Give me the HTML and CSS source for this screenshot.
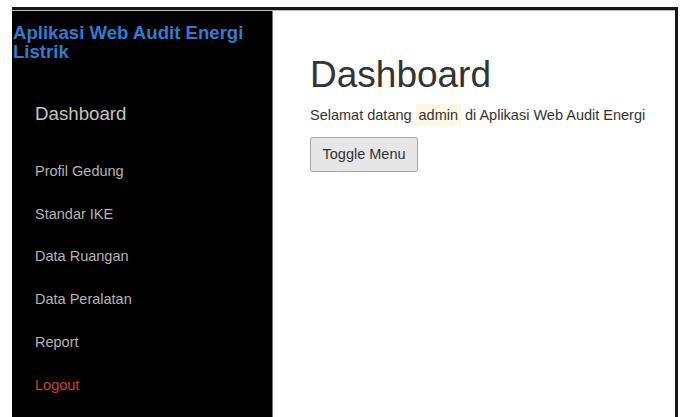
FILE: index.html
```html
<!DOCTYPE html>
<html lang="id">
<head>
<meta charset="utf-8">
<title>Dashboard - Aplikasi Web Audit Energi Listrik</title>
<link rel="stylesheet" href="styles.css">
</head>
<body>
<div class="window">
  <div class="layout">
    <aside class="sidebar">
      <h3 class="brand">Aplikasi Web Audit Energi Listrik</h3>
      <ul class="nav">
        <li class="nav-home"><a href="#">Dashboard</a></li>
        <li><a href="#">Profil Gedung</a></li>
        <li><a href="#">Standar IKE</a></li>
        <li><a href="#">Data Ruangan</a></li>
        <li><a href="#">Data Peralatan</a></li>
        <li><a href="#">Report</a></li>
        <li><a href="#" class="logout">Logout</a></li>
      </ul>
    </aside>
    <main class="content">
      <h1 class="title">Dashboard</h1>
      <p class="welcome">Selamat datang <mark class="user">admin</mark> di Aplikasi Web Audit Energi</p>
      <button class="toggle" type="button">Toggle Menu</button>
    </main>
  </div>
</div>
</body>
</html>
```

FILE: styles.css
```css
html, body {
  height: 100%;
}

body {
  margin: 0;
  background: #ffffff;
  font-family: "Liberation Sans", Arial, Helvetica, sans-serif;
  font-size: 14.5px;
  color: #333333;
  overflow: hidden;
}

/* outer window frame */
.window {
  margin: 7px 0 0 12px;
  width: 666px;
  height: calc(100% - 7px);
  border-top: 3px solid #161616;
  border-right: 3px solid #161616;
  box-sizing: border-box;
  display: flex;
  flex-direction: column;
}

.layout {
  flex: 1;
  display: flex;
  border-top: 1px solid #bdbdbd;
}

/* sidebar */
.sidebar {
  width: 260px;
  flex: none;
  background: #000000;
  border-right: 1px solid #7a7a7a;
  padding-top: 12px;
}

.brand {
  margin: 0 0 32px;
  padding-left: 1px;
  font-size: 18.6px;
  line-height: 19px;
  font-weight: bold;
  color: #2d7dd2;
}

.nav {
  list-style: none;
  margin: 0;
  padding: 0;
}

.nav a {
  display: block;
  padding-left: 23px;
  line-height: 42.8px;
  color: #b4b4b4;
  text-decoration: none;
}

.nav-home {
  margin-bottom: 14px;
}

.nav-home a {
  font-size: 18.7px;
  color: #c4c4c4;
}

.nav a.logout {
  color: #d23a3a;
}

/* main area */
.content {
  flex: 1;
  padding: 44px 20px 0 37px;
}

.title {
  margin: 0 0 10px;
  font-size: 37px;
  font-weight: normal;
  line-height: 1.085;
  color: #333333;
}

.welcome {
  margin: 0 0 11px;
  line-height: 20.7px;
}

.user {
  background: #fcf8e3;
  color: #333333;
  padding: 0.2em;
}

.toggle {
  font-family: inherit;
  font-size: 14.5px;
  line-height: 20px;
  color: #333333;
  background: #e6e6e6;
  border: 1px solid #a3a3a3;
  border-radius: 3px;
  padding: 6px 11.5px 7px;
  margin: 0;
}
```
